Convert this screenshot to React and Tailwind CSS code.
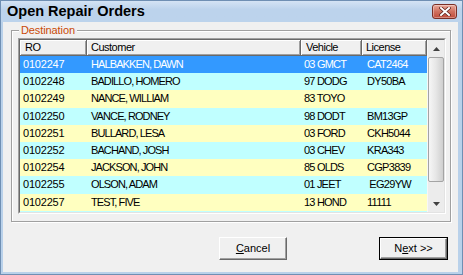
const rows = [
  ["0102247", "HALBAKKEN, DAWN", "03 GMCT", "CAT2464"],
  ["0102248", "BADILLO, HOMERO", "97 DODG", "DY50BA"],
  ["0102249", "NANCE, WILLIAM", "83 TOYO", ""],
  ["0102250", "VANCE, RODNEY", "98 DODT", "BM13GP"],
  ["0102251", "BULLARD, LESA", "03 FORD", "CKH5044"],
  ["0102252", "BACHAND, JOSH", "03 CHEV", "KRA343"],
  ["0102254", "JACKSON, JOHN", "85 OLDS", "CGP3839"],
  ["0102255", "OLSON, ADAM", "01 JEET", " EG29YW"],
  ["0102257", "TEST, FIVE", "13 HOND", "11111"],
  ["", "", "", ""],
];

const cols = [
  { label: "RO", w: "w-[67px]", pad: "pl-[5px]" },
  { label: "Customer", w: "w-[214px]", pad: "pl-[4px]" },
  { label: "Vehicle", w: "w-[61px]", pad: "pl-[5px]" },
  { label: "License", w: "w-[65px]", pad: "pl-[4px]" },
];

const Arrow = ({ down }) => (
  <svg width="7" height="4" viewBox="0 0 7 4">
    <polygon points={down ? "0,0 7,0 3.5,4" : "0,4 7,4 3.5,0"} fill="#404040" />
  </svg>
);

const rowBg = (i) => {
  if (i === 0) return "bg-[#3399ff] text-white";
  return i % 2 === 1 ? "bg-[#c0ffff]" : "bg-[#ffffc0]";
};

export default function App() {
  return (
    <div className="w-[463px] h-[275px] flex flex-col bg-[#b9d1ea] border border-[#6f8fb3] overflow-hidden font-['Liberation_Sans',Arial,sans-serif] text-black select-none">
      {/* title bar */}
      <div className="h-[21px] flex items-center justify-between pl-[6px] pr-[5px] bg-gradient-to-b from-[#d4e3f4] to-[#bcd3ec] to-40%">
        <span className="text-[14.5px] font-bold leading-none">Open Repair Orders</span>
        <div className="w-[25px] h-[15px] rounded-[3px] border border-[#7a2f26] bg-gradient-to-b from-[#e9a99b] via-[#d0705f] to-[#c04a3a] flex items-center justify-center shadow-[inset_0_0_0_1px_rgba(255,255,255,0.35)]">
          <svg width="12" height="9" viewBox="0 0 12 9">
            <path d="M2 1 L10 8 M10 1 L2 8" stroke="#5a1f18" strokeWidth="3.4" strokeLinecap="square" />
            <path d="M2 1 L10 8 M10 1 L2 8" stroke="#ffffff" strokeWidth="2" strokeLinecap="square" />
          </svg>
        </div>
      </div>

      {/* client area */}
      <div className="flex-1 ml-[2px] mr-[4px] mb-[2px] bg-[#f0f0f0] flex flex-col pt-[8px]">
        <div className="relative ml-[8px] mr-[7px] h-[192px] border border-[#a0a0a0] shadow-[inset_1px_1px_0_#fff,1px_1px_0_#fff] pt-[7px] pl-[6px] pr-[4px]">
          <span className="absolute left-[7px] top-[-8px] px-[2px] bg-[#f0f0f0] text-[11px] leading-[14px] text-[#c94a06] tracking-[-0.1px]">
            Destination
          </span>

          {/* list view */}
          <div className="h-[176px] border border-t-[#a0a0a0] border-l-[#a0a0a0] border-b-white border-r-white">
            <div className="h-full flex border border-t-[#696969] border-l-[#696969] border-b-[#e3e3e3] border-r-[#e3e3e3] bg-white">
              <div className="w-[407px] flex flex-col">
                <div className="h-[16px] flex">
                  {cols.map((c) => (
                    <div
                      key={c.label}
                      className={`${c.w} ${c.pad} h-full bg-[#f0f0f0] border-r border-b border-[#696969] shadow-[inset_1px_1px_0_#fff,inset_-1px_-1px_0_#a0a0a0] text-[11px] leading-[15px] tracking-[-0.5px]`}
                    >
                      {c.label}
                    </div>
                  ))}
                </div>
                <div className="h-[156px] overflow-hidden">
                  {rows.map((r, i) => (
                    <div key={i} className={`h-[17.2px] flex items-center text-[11px] leading-none ${rowBg(i)}`}>
                      <div className="w-[67px] pl-[3px] tracking-[-0.2px]">{r[0]}</div>
                      <div className="w-[214px] pl-[4px] tracking-[-0.9px]">{r[1]}</div>
                      <div className="w-[61px] pl-[3px] tracking-[-0.8px]">{r[2]}</div>
                      <div className="w-[65px] pl-[5px] tracking-[-0.7px] whitespace-pre">{r[3]}</div>
                    </div>
                  ))}
                </div>
              </div>

              {/* scrollbar */}
              <div className="w-[17px] flex flex-col bg-[#ececec] border-l border-[#f7f7f7]">
                <div className="h-[17px] flex items-center justify-center">
                  <Arrow />
                </div>
                <div className="flex-1 flex flex-col">
                  <div className="h-[125px] rounded-[2px] border border-[#a4a4a4] bg-gradient-to-r from-[#f6f6f6] via-[#e6e6e6] to-[#cfcfcf]" />
                </div>
                <div className="h-[17px] flex items-center justify-center">
                  <Arrow down />
                </div>
              </div>
            </div>
          </div>
        </div>

        {/* buttons */}
        <div className="mt-[15px] flex justify-end gap-[92px] pr-[10px]">
          <button className="w-[68px] h-[23px] border border-t-white border-l-white border-b-[#696969] border-r-[#696969] bg-[#f0f0f0] shadow-[inset_-1px_-1px_0_#a0a0a0] text-[11px] leading-none">
            <span className="underline">C</span>ancel
          </button>
          <button className="w-[69px] h-[23px] border border-black bg-[#f0f0f0] text-[11px] leading-none">
            <div className="w-full h-full flex items-center justify-center border border-t-white border-l-white border-b-[#696969] border-r-[#696969] shadow-[inset_-1px_-1px_0_#a0a0a0]">
              N<span className="underline">e</span>xt &gt;&gt;
            </div>
          </button>
        </div>
      </div>
    </div>
  );
}
